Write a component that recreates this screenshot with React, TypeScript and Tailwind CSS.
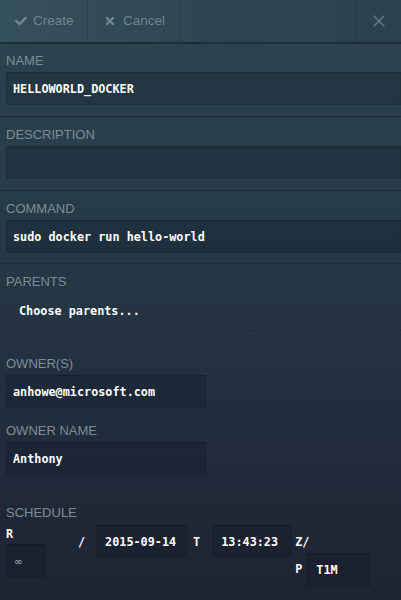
import { FaCheck, FaTimes } from 'react-icons/fa';
import { X } from 'lucide-react';

const mono = "font-['DejaVu_Sans_Mono',monospace] font-bold text-[11.8px] leading-[16px] text-white";
const label = "font-['Liberation_Sans',Arial,sans-serif] text-[13px] leading-[16px] uppercase text-[#7d8d95]";
const box = 'bg-[rgba(10,20,30,0.22)] shadow-[inset_0_1px_2px_rgba(0,0,0,0.25)]';

function Field({ name, value, narrow }: { name: string; value?: string; narrow?: boolean }) {
  return (
    <div>
      <div className={label}>{name}</div>
      <div className={`mt-[3px] flex h-[33px] items-center px-[7px] ${box} ${narrow ? 'w-[200px]' : 'w-full'}`}>
        <span className={mono}>{value}</span>
      </div>
    </div>
  );
}

function Section({ children, first }: { children: React.ReactNode; first?: boolean }) {
  return (
    <div className={`border-b border-[#1c2a34] pb-[11px] pl-[6px] ${first ? 'pt-[9px]' : 'pt-[10px]'}`}>
      {children}
    </div>
  );
}

export default function App() {
  return (
    <div className="h-[600px] w-[401px] overflow-hidden bg-[linear-gradient(180deg,#2d4651_0%,#263b48_35%,#222d3d_70%,#1e2333_100%)] font-['Liberation_Sans',Arial,sans-serif]">
      {/* toolbar */}
      <div className="flex h-[44px] items-stretch border-b-2 border-[#1e2c36] bg-[linear-gradient(90deg,#35515b_0%,#2e4653_50%,#2b4150_100%)] text-[13.5px] text-[#71858e]">
        <div className="flex w-[88px] items-center gap-[6px] border-r border-[#2a3e48] pl-[15px]">
          <FaCheck size={12} />
          <span>Create</span>
        </div>
        <div className="flex w-[92px] items-center justify-center gap-[7px] border-r border-[#2a3e48] pl-[2px]">
          <FaTimes size={12} />
          <span>Cancel</span>
        </div>
        <div className="flex-1" />
        <div className="flex w-[46px] items-center justify-center border-l border-[#283b46]">
          <X size={20} strokeWidth={1.6} className="text-[#657c86]" />
        </div>
      </div>

      <Section first>
        <Field name="Name" value="HELLOWORLD_DOCKER" />
      </Section>
      <Section>
        <Field name="Description" />
      </Section>
      <div className="border-b border-[#1c2a34] pb-[10px] pl-[6px] pt-[10px]">
        <Field name="Command" value="sudo docker run hello-world" />
      </div>
      <div className="flex h-[67px] flex-col border-b border-[#1c2a34] pl-[6px] pt-[10px]">
        <div className={label}>Parents</div>
        <div className={`${mono} mt-[13px] pl-[13px]`}>Choose parents...</div>
      </div>
      <div className="flex flex-col gap-[15px] border-b border-[#1c2a34] pb-[14px] pl-[6px] pt-[25px]">
        <Field name="Owner(s)" value="anhowe@microsoft.com" narrow />
        <Field name="Owner name" value="Anthony" narrow />
      </div>

      {/* schedule */}
      <div className="pl-[6px] pt-[15px]">
        <div className={label}>Schedule</div>
        <div className="flex items-start">
          <div className="flex flex-col">
            <span className={`${mono} mt-[5px]`}>R</span>
            <div className={`mt-[2px] flex h-[34px] w-[39px] items-center px-[8px] ${box}`}>
              <span className="font-['DejaVu_Sans',sans-serif] text-[10px] font-bold text-[#8a969e]">∞</span>
            </div>
          </div>
          <span className={`${mono} ml-[33px] mt-[13px]`}>/</span>
          <div className={`ml-[12px] mt-[4px] flex h-[33px] w-[90px] items-center pl-[8px] ${box}`}>
            <span className={mono}>2015-09-14</span>
          </div>
          <span className={`${mono} ml-[6px] mt-[13px]`}>T</span>
          <div className={`ml-[12px] mt-[4px] flex h-[33px] w-[80px] items-center pl-[9px] ${box}`}>
            <span className={mono}>13:43:23</span>
          </div>
          <div className="ml-[3px] mt-[13px] flex flex-col">
            <span className={mono}>Z/</span>
            <div className="mt-[3px] flex items-start">
              <span className={`${mono} mt-[8px]`}>P</span>
              <div className={`ml-[5px] flex h-[34px] w-[63px] items-center pl-[9px] ${box}`}>
                <span className={mono}>T1M</span>
              </div>
            </div>
          </div>
        </div>
      </div>
    </div>
  );
}
